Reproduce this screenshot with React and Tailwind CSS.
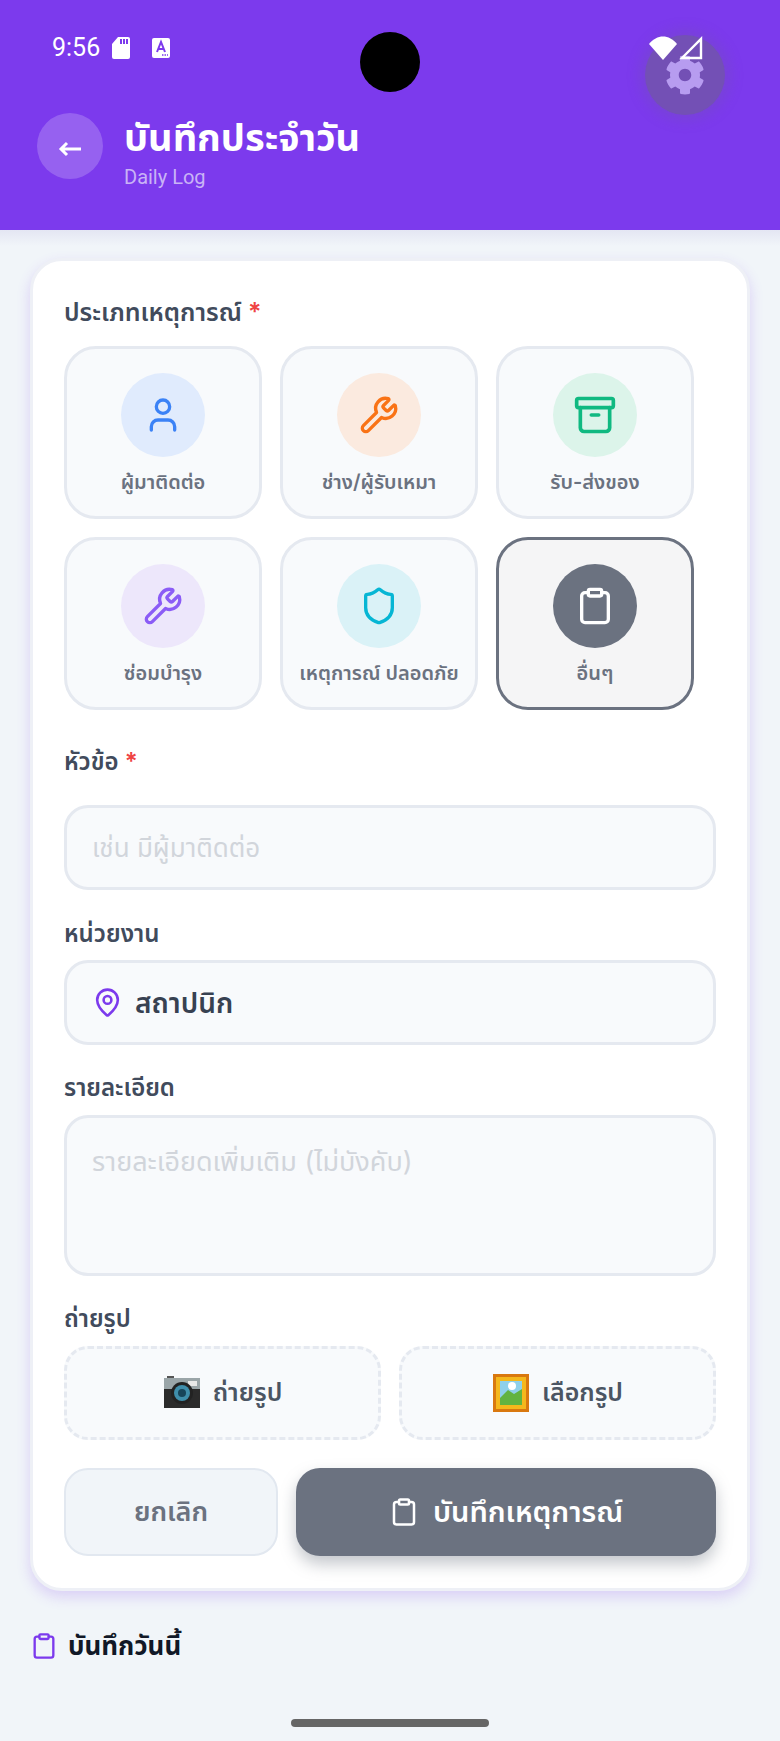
import { User, Wrench, Archive, Shield, Clipboard, MapPin } from "lucide-react";
import { FaCog } from "react-icons/fa";

const TYPES = [
  { label: "ผู้มาติดต่อ", Icon: User, circle: "bg-[#e0ebfd]", icon: "text-[#3b82f6]" },
  { label: "ช่าง/ผู้รับเหมา", Icon: Wrench, circle: "bg-[#fbeadf]", icon: "text-[#f97316]" },
  { label: "รับ-ส่งของ", Icon: Archive, circle: "bg-[#dcf4ea]", icon: "text-[#10b981]" },
  { label: "ซ่อมบำรุง", Icon: Wrench, circle: "bg-[#ede7fb]", icon: "text-[#8b5cf6]" },
  { label: "เหตุการณ์ ปลอดภัย", Icon: Shield, circle: "bg-[#daf2f7]", icon: "text-[#06b6d4]" },
  { label: "อื่นๆ", Icon: Clipboard, circle: "bg-[#6b7280]", icon: "text-white", active: true },
];

function CameraEmoji() {
  return (
    <svg width="38" height="38" viewBox="0 0 38 38">
      <rect x="4" y="2" width="7" height="5" fill="#555" />
      <rect x="1" y="4" width="36" height="12" fill="#9aa5a8" />
      <rect x="1" y="15" width="36" height="19" fill="#2b2b2b" />
      <rect x="25" y="7" width="9" height="5" fill="#e8e8e8" />
      <circle cx="19" cy="19" r="11" fill="#222" />
      <circle cx="19" cy="19" r="8" fill="#3f8eab" />
      <circle cx="19" cy="19" r="4" fill="#17455a" />
    </svg>
  );
}

function PictureEmoji() {
  return (
    <svg width="38" height="38" viewBox="0 0 38 38">
      <rect x="1" y="0" width="36" height="38" fill="#d9780f" />
      <rect x="4" y="3" width="30" height="32" fill="#f5b81c" />
      <rect x="8" y="7" width="22" height="24" fill="#8fd0ea" />
      <path d="M8 24 L16 16 L22 20 L30 15 V31 H8 Z" fill="#62b340" />
      <circle cx="20" cy="12" r="4" fill="#fff" />
    </svg>
  );
}

function Label({ children, required, className = "" }) {
  return (
    <div className={`text-[24px] leading-[28px] font-semibold text-[#414b5c] ${className}`}>
      {children}
      {required && <span className="text-[#ef4444]"> *</span>}
    </div>
  );
}

export default function App() {
  return (
    <div
      className="relative h-[1741px] w-[780px] overflow-hidden bg-[#f1f5f9]"
      style={{ fontFamily: 'Inter, "Noto Sans", "Noto Sans Thai", Roboto, sans-serif' }}
    >
      {/* Header */}
      <div className="relative h-[230px] bg-[#7c3aed]">
        <div className="flex items-center px-[52px] pt-[32px] text-white">
          <span className="text-[25px] leading-[32px] font-normal" style={{ fontFamily: "Roboto, sans-serif" }}>9:56</span>
          <svg className="ml-[11px]" width="20" height="24" viewBox="0 0 20 24">
            <path d="M7 1 H17 A2 2 0 0 1 19 3 V21 A2 2 0 0 1 17 23 H3 A2 2 0 0 1 1 21 V8 Z" fill="#fff" />
            <rect x="9" y="3" width="2" height="5" fill="#7c3aed" />
            <rect x="12" y="3" width="2" height="5" fill="#7c3aed" />
            <rect x="15" y="3" width="2" height="5" fill="#7c3aed" />
          </svg>
          <svg className="ml-[21px]" width="18" height="20" viewBox="0 0 18 20">
            <rect x="0" y="0" width="18" height="20" rx="2" fill="#fff" />
            <path d="M5 14 L9 4 L13 14 M6.5 11 H11.5" stroke="#7c3aed" strokeWidth="2" fill="none" />
            <path d="M10 17 H16" stroke="#7c3aed" strokeWidth="1.5" strokeDasharray="1.5 1" />
          </svg>
        </div>

        {/* camera cutout */}
        <div className="absolute left-[360px] top-[32px] h-[60px] w-[60px] rounded-full bg-black" />

        {/* floating settings button */}
        <div className="absolute left-[645px] top-[35px] flex h-[80px] w-[80px] items-center justify-center rounded-full bg-[#7350b5] shadow-[0_0_12px_6px_rgba(115,80,181,0.35)]">
          <FaCog className="text-[#b79cf0]" size={40} />
        </div>

        {/* wifi + signal */}
        <svg className="absolute left-[649px] top-[36px]" width="56" height="24" viewBox="0 0 56 24">
          <path d="M0 8 C8 -2 20 -2 28 8 L14 24 Z" fill="#fff" />
          <path d="M33 22 L52 3 V22 Z" fill="none" stroke="#fff" strokeWidth="2.4" />
        </svg>

        <div className="mt-[49px] flex items-start pl-[37px]">
          <button className="flex h-[66px] w-[66px] items-center justify-center rounded-full bg-white/20 text-[32px] leading-none text-white">
            <svg width="24" height="16" viewBox="0 0 24 16" className="mt-[6px]">
              <path d="M23 8 H3 M9 2 L3 8 L9 14" fill="none" stroke="#fff" strokeWidth="3" />
            </svg>
          </button>
          <div className="ml-[21px]">
            <div className="text-[38px] leading-[48px] font-bold text-white">บันทึกประจำวัน</div>
            <div className="mt-[4px] text-[20px] leading-[24px] text-[#c9b3f6]" style={{ fontFamily: "Roboto, sans-serif" }}>Daily Log</div>
          </div>
        </div>
      </div>
      <div className="h-[16px] bg-gradient-to-b from-[#e4e6f3] to-[#f1f5f9]" />

      {/* Form card */}
      <div className="mx-[30px] mt-[12px] h-[1333px] rounded-[32px] border-[3px] border-[#eef0f6] bg-white px-[31px] pt-[37px] shadow-[0_6px_14px_rgba(124,58,237,0.2)]">
        <div className="text-[25px] leading-[28px] font-semibold text-[#414b5c]">
          ประเภทเหตุการณ์<span className="text-[#ef4444]"> *</span>
        </div>
        <div className="mt-[20px] grid grid-cols-[198px_198px_198px] gap-[18px]">
          {TYPES.map(({ label, Icon, circle, icon, active }) => (
            <div
              key={label}
              className={`flex h-[173px] flex-col items-center rounded-[32px] border-[3px] pt-[24px] ${active ? "border-[#6b7280] bg-[#f5f5f6]" : "border-[#e5e9f0] bg-[#f8fafc]"}`}
            >
              <div className={`flex h-[84px] w-[84px] items-center justify-center rounded-full ${circle}`}>
                <Icon className={icon} size={Icon === Archive ? 44 : 40} strokeWidth={2} />
              </div>
              <div className="mt-[13px] whitespace-nowrap text-[20px] leading-[24px] font-semibold text-[#6b7280]">{label}</div>
            </div>
          ))}
        </div>

        <Label required className="mt-[38px]">หัวข้อ</Label>
        <div className="mt-[29px] flex h-[85px] items-center rounded-[24px] border-[3px] border-[#e5e9f0] bg-[#f8fafc] px-[25px] text-[26px] text-[#d1d5db]">
          เช่น มีผู้มาติดต่อ
        </div>

        <Label className="mt-[30px]">หน่วยงาน</Label>
        <div className="mt-[12px] flex h-[85px] items-center gap-[12px] rounded-[24px] border-[3px] border-[#e5e9f0] bg-[#f8fafc] px-[25px] text-[28px] font-semibold text-[#374151]">
          <MapPin className="text-[#7c3aed]" size={31} strokeWidth={2} />
          สถาปนิก
        </div>

        <Label className="mt-[29px]">รายละเอียด</Label>
        <div className="mt-[13px] h-[161px] rounded-[24px] border-[3px] border-[#e5e9f0] bg-[#f8fafc] px-[25px] pt-[28px] text-[27px] leading-[32px] text-[#d1d5db]">
          รายละเอียดเพิ่มเติม (ไม่บังคับ)
        </div>

        <Label className="mt-[29px] font-medium">ถ่ายรูป</Label>
        <div className="mt-[13px] grid grid-cols-2 gap-[18px]">
          <div className="flex h-[94px] items-center justify-center gap-[12px] rounded-[24px] border-[3px] border-dashed border-[#e5e9f0] bg-[#f8fafc] text-[25px] font-semibold text-[#4b5563]">
            <CameraEmoji />
            ถ่ายรูป
          </div>
          <div className="flex h-[94px] items-center justify-center gap-[12px] rounded-[24px] border-[3px] border-dashed border-[#e5e9f0] bg-[#f8fafc] text-[25px] font-semibold text-[#4b5563]">
            <PictureEmoji />
            เลือกรูป
          </div>
        </div>

        <div className="mt-[28px] flex gap-[18px]">
          <button className="h-[88px] w-[214px] rounded-[24px] border-2 border-[#e2e8f0] bg-[#f1f5f9] text-[27px] font-semibold text-[#6b7280]">
            ยกเลิก
          </button>
          <button className="flex h-[88px] flex-1 items-center justify-center gap-[14px] rounded-[24px] bg-[#6b7280] text-[29px] font-semibold text-white shadow-[0_8px_16px_rgba(107,114,128,0.4)]">
            <Clipboard size={30} strokeWidth={2} />
            บันทึกเหตุการณ์
          </button>
        </div>
      </div>

      {/* Today's logs */}
      <div className="mt-[38px] flex items-center gap-[10px] pl-[30px] text-[26px] leading-[34px] font-bold text-[#111827]">
        <Clipboard className="text-[#7c3aed]" size={28} strokeWidth={2} />
        บันทึกวันนี้
      </div>

      {/* home indicator */}
      <div className="absolute bottom-[14px] left-[291px] h-[8px] w-[198px] rounded-full bg-[#666]" />
    </div>
  );
}
